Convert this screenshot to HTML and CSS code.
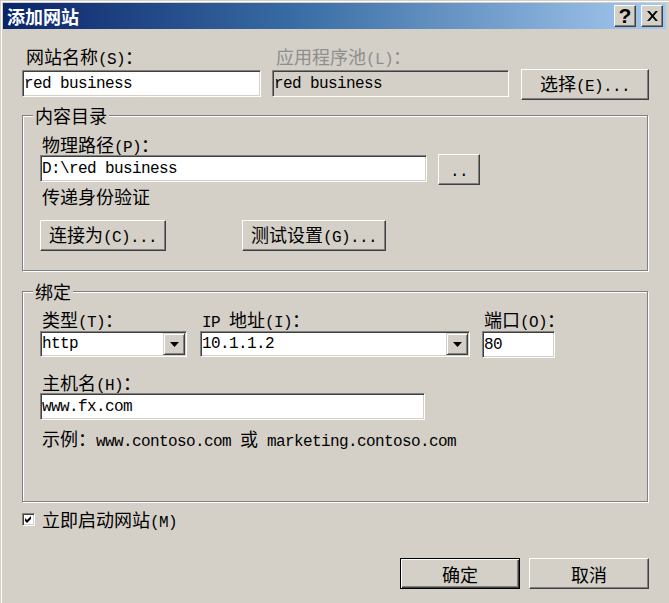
FILE: index.html
```html
<!DOCTYPE html>
<html lang="zh-CN">
<head>
<meta charset="utf-8">
<title>添加网站</title>
<link rel="stylesheet" href="styles.css">
</head>
<body>
<div class="window">
  <div class="titlebar">
    <span class="title">添加网站</span>
    <div class="caption-btns">
      <span class="cbtn help">?</span>
      <span class="cbtn close">
        <svg width="11" height="10" viewBox="0 0 11 10"><path d="M0 0h2.4l3.1 3.6L8.6 0H11L6.7 5 11 10H8.6L5.5 6.4 2.4 10H0l4.3-5z" fill="#000"/></svg>
      </span>
    </div>
  </div>

  <div class="client">
    <div class="top-row">
      <div class="field site-name">
        <label class="lbl top-lbl">网站名称<span class="en">(S)</span>：</label>
        <div class="input">red business</div>
      </div>
      <div class="field app-pool">
        <label class="lbl top-lbl disabled">应用程序池<span class="en">(L)</span>：</label>
        <div class="input readonly">red business</div>
      </div>
      <button class="btn pick-btn">选择<span class="en">(E)...</span></button>
    </div>

    <fieldset class="group group-content">
      <legend>内容目录</legend>
      <div class="gbody content-body">
        <label class="lbl">物理路径<span class="en">(P)</span>：</label>
        <div class="path-row">
          <div class="input path-input">D:\red business</div>
          <button class="btn browse-btn"><span class="en">..</span></button>
        </div>
        <div class="lbl pass-lbl">传递身份验证</div>
        <div class="auth-row">
          <button class="btn connect-btn">连接为<span class="en">(C)...</span></button>
          <button class="btn test-btn">测试设置<span class="en">(G)...</span></button>
        </div>
      </div>
    </fieldset>

    <fieldset class="group group-binding">
      <legend>绑定</legend>
      <div class="gbody binding-body">
        <div class="binding-row">
          <div class="field type-field">
            <label class="lbl">类型<span class="en">(T)</span>：</label>
            <div class="select">
              <span class="select-text"><span class="en">http</span></span>
              <span class="drop-btn"><svg width="9" height="5" viewBox="0 0 9 5"><path d="M0 0h9L4.5 5z" fill="#000"/></svg></span>
            </div>
          </div>
          <div class="field ip-field">
            <label class="lbl"><span class="en">IP </span>地址<span class="en">(I)</span>：</label>
            <div class="select">
              <span class="select-text"><span class="en">10.1.1.2</span></span>
              <span class="drop-btn"><svg width="9" height="5" viewBox="0 0 9 5"><path d="M0 0h9L4.5 5z" fill="#000"/></svg></span>
            </div>
          </div>
          <div class="field port-field">
            <label class="lbl">端口<span class="en">(O)</span>：</label>
            <div class="input port-input">80</div>
          </div>
        </div>
        <label class="lbl host-lbl">主机名<span class="en">(H)</span>：</label>
        <div class="input host-input">www.fx.com</div>
        <div class="lbl example">示例：<span class="en">www.contoso.com </span>或<span class="en"> marketing.contoso.com</span></div>
      </div>
    </fieldset>

    <div class="check-row">
      <span class="checkbox">
        <svg width="7" height="7" viewBox="0 0 7 7"><path d="M0 2L2 4L6 0V3L2 7L0 5Z" fill="#000"/></svg>
      </span>
      <span class="lbl">立即启动网站<span class="en">(M)</span></span>
    </div>

    <div class="dialog-btns">
      <button class="btn default-btn">确定</button>
      <button class="btn cancel-btn">取消</button>
    </div>
  </div>
</div>
</body>
</html>
```

FILE: styles.css
```css
* { box-sizing: border-box; }

html, body {
  margin: 0;
  padding: 0;
}

body {
  width: 669px;
  height: 603px;
  overflow: hidden;
  background: #d4d0c8;
  color: #000;
  font-family: "Noto Sans CJK SC", "Noto Sans", sans-serif;
  font-size: 18px;
  line-height: 20px;
}

.en {
  font-family: "Liberation Mono", "DejaVu Sans Mono", monospace;
  font-size: 16px;
  letter-spacing: -0.6px;
}

/* window frame */
.window {
  width: 669px;
  height: 603px;
  border-top: 1px solid #d4d0c8;
  border-left: 1px solid #d4d0c8;
  padding: 2px 3px 0 2px;
  box-shadow: inset 1px 1px 0 #fff;
}

.titlebar {
  height: 26px;
  display: flex;
  align-items: center;
  justify-content: space-between;
  padding: 0 3px 0 4px;
  background: linear-gradient(to right, #0a246a 0%, #3a6ea5 45%, #a6caf0 100%);
}

.title {
  color: #fff;
  font-weight: bold;
  font-size: 18px;
  line-height: 26px;
}

.caption-btns {
  display: flex;
  gap: 5px;
}

.cbtn {
  width: 22px;
  height: 22px;
  display: flex;
  align-items: center;
  justify-content: center;
  background: #d4d0c8;
  border: 1px solid;
  border-color: #fff #404040 #404040 #fff;
  box-shadow: inset -1px -1px 0 #808080;
}

.cbtn.help {
  font-family: "Liberation Sans", Arial, sans-serif;
  font-weight: bold;
  font-size: 21px;
  line-height: 20px;
  padding-bottom: 1px;
}

/* client area */
.client {
  padding: 17px 17px 0 19px;
}

.lbl {
  display: block;
  height: 20px;
  line-height: 20px;
  white-space: nowrap;
}

.disabled { color: #8e8e8e; }

.top-row {
  display: flex;
  align-items: flex-start;
}

.field {
  display: flex;
  flex-direction: column;
}

.site-name { width: 239px; margin-right: 11px; }
.app-pool { width: 237px; margin-right: 12px; }

.top-lbl {
  padding-left: 4px;
  margin-bottom: 4px;
}

/* sunken text box */
.input {
  height: 27px;
  display: flex;
  align-items: center;
  padding: 0 0 0 1px;
  background: #fff;
  border: 1px solid;
  border-color: #808080 #fff #fff #808080;
  box-shadow: inset 1px 1px 0 #404040, inset -1px -1px 0 #d4d0c8;
  font-family: "Liberation Mono", "DejaVu Sans Mono", monospace;
  font-size: 16px;
  letter-spacing: -0.6px;
  white-space: pre;
}

.input.readonly { background: #d4d0c8; }

/* raised button */
.btn {
  height: 31px;
  margin: 0;
  padding: 0;
  background: #d4d0c8;
  color: #000;
  font-family: "Noto Sans CJK SC", sans-serif;
  font-size: 18px;
  line-height: 20px;
  border: 1px solid;
  border-color: #fff #404040 #404040 #fff;
  box-shadow: inset -1px -1px 0 #808080;
  border-radius: 0;
  white-space: nowrap;
}

.pick-btn {
  width: 128px;
  margin-top: 23px;
}

/* group boxes */
.group {
  width: 626px;
  min-width: 0;
  margin: 0;
  padding: 0;
  border: 1px solid #808080;
  box-shadow: inset 1px 1px 0 #fff, 1px 1px 0 #fff;
}

.group legend {
  margin-left: 10px;
  padding: 0 2px;
  height: 20px;
  line-height: 20px;
  background: #d4d0c8;
}

.group-content { margin-top: 5px; }
.group-binding { margin-top: 10px; }

.gbody { padding-left: 17px; }

.content-body {
  padding-top: 9px;
  padding-bottom: 19px;
}

.content-body > .lbl:first-child { padding-left: 2px; }

.path-row {
  display: flex;
  align-items: flex-start;
  gap: 11px;
}

.path-input {
  width: 387px;
  margin-top: 1px;
}

.browse-btn { width: 42px; }

.pass-lbl {
  margin-top: 1px;
  padding-left: 2px;
}

.auth-row {
  display: flex;
  gap: 76px;
  margin-top: 14px;
}

.connect-btn { width: 126px; }
.test-btn { width: 144px; }

.binding-body {
  padding-top: 8px;
  padding-bottom: 53px;
}

.binding-row {
  display: flex;
  align-items: flex-start;
}

.binding-row .lbl {
  padding-left: 2px;
  margin-bottom: 2px;
}

.type-field { width: 147px; margin-right: 13px; }
.ip-field { width: 270px; margin-right: 12px; }
.port-field { width: 73px; }

.select {
  height: 26px;
  display: flex;
  padding: 1px;
  background: #fff;
  border: 1px solid;
  border-color: #808080 #fff #fff #808080;
  box-shadow: inset 1px 1px 0 #404040, inset -1px -1px 0 #d4d0c8;
}

.select-text {
  flex: 1;
  display: flex;
  align-items: center;
  padding-left: 0;
}

.drop-btn {
  width: 22px;
  display: flex;
  align-items: center;
  justify-content: center;
  background: #d4d0c8;
  border: 1px solid;
  border-color: #d4d0c8 #404040 #404040 #d4d0c8;
  box-shadow: inset 1px 1px 0 #fff, inset -1px -1px 0 #808080;
}

.port-input { margin-top: 0; }

.host-lbl {
  margin-top: 14px;
  margin-bottom: 1px;
  padding-left: 2px;
}

.host-input { width: 385px; }

.example {
  margin-top: 8px;
  padding-left: 2px;
}

/* checkbox row */
.check-row {
  display: flex;
  align-items: center;
  gap: 7px;
  margin-top: 7px;
  height: 20px;
}

.checkbox {
  width: 13px;
  height: 13px;
  display: flex;
  align-items: center;
  justify-content: center;
  background: #fff;
  border: 1px solid;
  border-color: #808080 #fff #fff #808080;
  box-shadow: inset 1px 1px 0 #404040, inset -1px -1px 0 #d4d0c8;
}

.dialog-btns {
  display: flex;
  justify-content: flex-end;
  gap: 9px;
  margin-top: 29px;
}

.default-btn,
.cancel-btn { width: 120px; }

.default-btn {
  border: 1px solid #000;
  box-shadow: inset 1px 1px 0 #fff, inset -1px -1px 0 #404040, inset -2px -2px 0 #808080;
}
```
